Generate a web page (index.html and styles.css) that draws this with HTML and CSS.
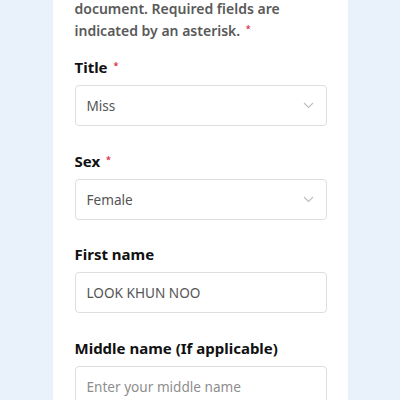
FILE: index.html
```html
<!DOCTYPE html>
<html lang="en">
<head>
    <meta charset="UTF-8">
    <meta name="viewport" content="width=device-width, initial-scale=1.0">
    <title>Traveller details</title>
    <link rel="stylesheet" href="styles.css">
</head>
<body>

<div class="card">
    <p class="intro">document. Required fields are indicated by an asterisk. <span class="req">*</span></p>

    <div class="field">
        <label for="title">Title <span class="req">*</span></label>
        <div class="select-box">
            <span class="value" id="title">Miss</span>
            <svg class="chevron" width="11" height="7" viewBox="0 0 11 7"><path d="M1 1 L5.5 5.5 L10 1" fill="none" stroke="#bdbdbd" stroke-width="1.1"/></svg>
        </div>
    </div>

    <div class="field">
        <label for="sex">Sex <span class="req">*</span></label>
        <div class="select-box">
            <span class="value" id="sex">Female</span>
            <svg class="chevron" width="11" height="7" viewBox="0 0 11 7"><path d="M1 1 L5.5 5.5 L10 1" fill="none" stroke="#bdbdbd" stroke-width="1.1"/></svg>
        </div>
    </div>

    <div class="field">
        <label for="firstName">First name</label>
        <input type="text" id="firstName" value="LOOK KHUN NOO">
    </div>

    <div class="field">
        <label for="middleName">Middle name (If applicable)</label>
        <input type="text" id="middleName" placeholder="Enter your middle name">
    </div>
</div>

</body>
</html>
```

FILE: styles.css
```css
body {
    margin: 0;
    background-color: #e9f1fb;
    font-family: "Noto Sans", Arial, sans-serif;
    overflow: hidden;
}
.card {
    width: 295px;
    margin: 0 auto;
    padding: 0 21px 40px 22px;
    box-sizing: border-box;
    background-color: #ffffff;
    min-height: 400px;
}
.intro {
    margin: -2px 0 14px 0;
    font-size: 14px;
    line-height: 22px;
    font-weight: 600;
    color: #595959;
}
.req {
    color: #d9304a;
    font-size: 9px;
    line-height: 9px;
    vertical-align: 4px;
    margin-left: 2px;
}
.field {
    display: flex;
    flex-direction: column;
    margin-bottom: 23.5px;
}
.field label {
    font-size: 15px;
    line-height: 22px;
    font-weight: 700;
    color: #111111;
    margin-bottom: 7px;
}
.select-box,
.field input {
    height: 41px;
    box-sizing: border-box;
    border: 1px solid #dedede;
    border-radius: 4px;
    background-color: #ffffff;
    padding: 0 11px;
    font-family: "Noto Sans", Arial, sans-serif;
    font-size: 13.6px;
    color: #555555;
}
.select-box {
    display: flex;
    align-items: center;
    justify-content: space-between;
}
.chevron {
    margin-right: 1px;
}
.field input::placeholder {
    color: #8e8e8e;
}
```
